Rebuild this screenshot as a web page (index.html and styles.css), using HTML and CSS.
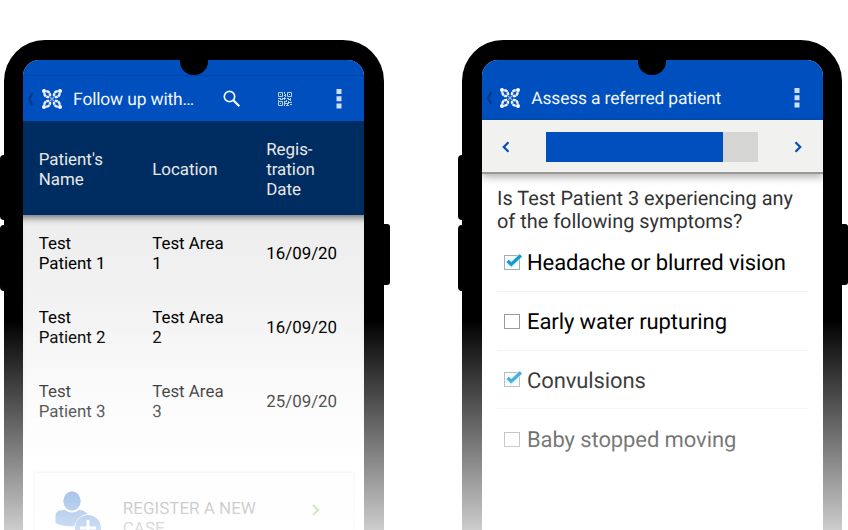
FILE: index.html
```html
<!DOCTYPE html>
<html lang="en">
<head>
<meta charset="utf-8">
<title>Patient follow up</title>
<link rel="stylesheet" href="styles.css">
</head>
<body>
<svg width="0" height="0" class="defs">
  <symbol id="back" viewBox="0 0 7 14"><path d="M5.300 .8 2.200 7l3.100 6.200" fill="none" stroke="#063985" stroke-width="2.200"/></symbol>
  <symbol id="logo" viewBox="0 0 20 20">
    <g id="petal">
      <path d="M4.200 2.300C7 2.500 8.300 4.200 8 7" fill="none" stroke="#f0f5fd" stroke-width="2.400" stroke-dasharray="3.600 .5"/>
      <path d="M2.300 4.200C2.500 7 4.200 8.300 7 8" fill="none" stroke="#f0f5fd" stroke-width="2.400" stroke-dasharray="3.600 .5"/>
      <path d="M7 7 10 10" stroke="#8fb4ea" stroke-width="1.200"/>
      <circle cx="2" cy="2" r="2" fill="#fff"/>
    </g>
    <use href="#petal" transform="rotate(90 10 10)"/>
    <use href="#petal" transform="rotate(180 10 10)"/>
    <use href="#petal" transform="rotate(270 10 10)"/>
  </symbol>
  <symbol id="dots" viewBox="0 0 6 20"><path d="M.5 0h5v5h-5zM.5 7.200h5v5h-5zM.5 14.400h5v5h-5z" fill="#cfdef4"/></symbol>
  <symbol id="checked" viewBox="0 0 20 18">
    <rect x="1.500" y="2.500" width="15" height="14" fill="#f3fbfe" stroke="#a5adb0"/>
    <path d="M5 8.200 8.300 11.500 17.700 2.600" fill="none" stroke="#bfeafa" stroke-width="5.500" opacity=".6"/>
    <path d="M4.600 7.900 8.300 11.400 17.900 2.400" fill="none" stroke="#1698ca" stroke-width="3.200"/>
  </symbol>
  <symbol id="unchecked" viewBox="0 0 20 18"><rect x="1.500" y="2.500" width="15" height="14" fill="#fff" stroke="#999"/></symbol>
</svg>
<main class="stage">
  <section class="phone">
    <i class="key key-up"></i><i class="key key-down"></i><i class="key key-power"></i>
    <div class="screen list-screen">
      <i class="notch"></i>
      <div class="status lined"></div>
      <header class="appbar">
        <svg class="back"><use href="#back"/></svg>
        <svg class="logo"><use href="#logo"/></svg>
        <h1>Follow up with…</h1>
        <svg class="search" viewBox="0 0 18 18"><circle cx="6.500" cy="6.500" r="5.200" fill="none" stroke="#f0f5fd" stroke-width="1.700"/><path d="m10.300 10.300 6 6" stroke="#f0f5fd" stroke-width="2.300"/></svg>
        <svg class="qr" viewBox="0 0 14 14" fill="none" stroke="#bcd1ef"><path d="M.5.5h4v4h-4zM9.500.5h4v4h-4zM.5 9.500h4v4h-4z"/><path d="M2 2.500h1M11 2.500h1M2 11.500h1M6.500 0v2M6 3.500h2M7.500 2v3M0 6.500h3M2 7.500h3M4 6.500h4M6.500 5v3M9 6.500h2M10 7.500h3M12.500 6v3M6 9.500h3M8.500 8v2M10.500 9v3M6.500 10v4M7 11.500h3M8 13.500h3M11 10.500h3M12 12.500h2M9.500 12v2M0 8.500h1"/></svg>
        <svg class="dots"><use href="#dots"/></svg>
      </header>
      <div class="row head"><span>Patient's<br>Name</span><span>Location</span><span>Regis-<br>tration<br>Date</span></div>
      <div class="rows">
        <div class="row"><span>Test<br>Patient 1</span><span>Test Area<br>1</span><span>16/09/20</span></div>
        <div class="row"><span>Test<br>Patient 2</span><span>Test Area<br>2</span><span>16/09/20</span></div>
        <div class="row"><span>Test<br>Patient 3</span><span>Test Area<br>3</span><span>25/09/20</span></div>
      </div>
      <div class="card">
        <svg class="person" viewBox="0 0 48 48"><ellipse cx="17" cy="10" rx="8.700" ry="9.700"/><path d="M.5 32v-8C1 20 5 19 10 19q7 5 14 0c4 0 7 2 8.500 4-8 1-12 7-13 12C12 36 4 34 .5 32Z"/><circle cx="33" cy="37" r="13"/><path d="M33 29v16M25 37h16" stroke="#fff" stroke-width="3"/></svg>
        <span>REGISTER A NEW<br>CASE</span>
        <svg class="go" viewBox="0 0 8 12"><path d="m1 1 5 5-5 5" fill="none" stroke="#58b51e" stroke-width="2.200"/></svg>
      </div>
    </div>
  </section>
  <section class="phone second">
    <i class="key key-up"></i><i class="key key-down"></i><i class="key key-power"></i>
    <div class="screen">
      <i class="notch"></i>
      <div class="status"></div>
      <header class="appbar short">
        <svg class="back"><use href="#back"/></svg>
        <svg class="logo"><use href="#logo"/></svg>
        <h1>Assess a referred patient</h1>
        <svg class="dots"><use href="#dots"/></svg>
      </header>
      <nav class="progress">
        <svg class="arrow" viewBox="0 0 8 12"><path d="M6.500 1.300 1.800 6l4.700 4.700"/></svg>
        <div class="track"><div class="fill"></div></div>
        <svg class="arrow" viewBox="0 0 8 12"><path d="M1.500 1.300 6.200 6l-4.700 4.700"/></svg>
      </nav>
      <div class="form">
        <p>Is Test Patient 3 experiencing any<br>of the following symptoms?</p>
        <div class="option"><svg><use href="#checked"/></svg><span>Headache or blurred vision</span></div>
        <div class="option"><svg><use href="#unchecked"/></svg><span>Early water rupturing</span></div>
        <div class="option"><svg><use href="#checked"/></svg><span>Convulsions</span></div>
        <div class="option"><svg><use href="#unchecked"/></svg><span>Baby stopped moving</span></div>
      </div>
    </div>
  </section>
  <div class="fade"></div>
</main>
</body>
</html>
```

FILE: styles.css
```css
* { box-sizing: border-box; }
body { margin: 0; background: #fff; font-family: Roboto, sans-serif; overflow: hidden; text-rendering: geometricPrecision; }
svg { display: block; flex: none; }
.defs { position: absolute; }
.stage { position: relative; display: flex; gap: 78px; height: 530px; padding: 40px 0 0 4px; overflow: hidden; }
.phone { position: relative; flex: none; width: 380px; height: 510px; padding: 19.5px 19.700px 0 19.300px; background: #000; border-radius: 41px 41px 0 0; }
.key { position: absolute; width: 10px; background: #000; border-radius: 4px; }
.key-up { left: -4px; top: 115px; height: 65px; }
.key-down { left: -4px; top: 185px; height: 66px; }
.key-power { right: -6px; top: 184px; height: 61px; border-radius: 3px; }
.screen { position: relative; height: 100%; background: #fff; border-radius: 16px 16px 0 0; overflow: hidden; display: flex; flex-direction: column; }
.second { padding: 19.500px 19.500px 0; }
.list-screen { background: linear-gradient(#ededed 155px, #f2f2f2 240px, #fff 420px); }
.notch { position: absolute; left: 156.500px; top: -11.500px; width: 28px; height: 27px; border-radius: 14px; background: #000; }
.status { flex: none; height: 16px; background: #004fbe; }
.status.lined { border-bottom: 1px solid #0344a6; }
.appbar { flex: none; height: 45.500px; background: #004fbe; color: #f2f6fc; display: flex; align-items: center; padding: 1px 0 0 4px; }
.appbar.short { height: 44.500px; }
h1 { margin: 2px auto 0 11.300px; font-weight: 400; font-size: 17.400px; letter-spacing: -.14px; line-height: 20px; white-space: nowrap; }
.back { width: 7px; height: 14px; margin-right: 7.500px; }
.logo { width: 20px; height: 20px; }
.search { width: 18px; height: 18px; margin-right: 37px; }
.qr { width: 14px; height: 14px; margin-right: 43.500px; }
.dots { width: 6px; height: 20px; margin-right: 22.500px; }
.row { flex: none; display: grid; grid-template-columns: 113.500px 114px 1fr; align-items: center; height: 74px; padding: 4px 0 0 15.400px; font-size: 16.900px; line-height: 20px; color: #000; }
.row.head { height: 94px; padding-top: 3.500px; background: #002d61; color: #e8e8e8; }
.rows { box-shadow: inset 0 9px 7px -6px rgba(0, 0, 0, .5); }
.card { flex: none; display: flex; width: 318px; height: 90px; margin: 36px 0 0 11.500px; padding-top: 18px; background: #fdfdfd; box-shadow: 0 0 3px rgba(0, 0, 0, .17); color: #555; font-size: 17px; line-height: 20px; }
.card span { padding-top: 8px; }
.person { width: 48px; height: 48px; margin: 0 20px 0 20px; fill: #0757c5; }
.go { width: 8px; height: 12px; margin: 13px 33px 0 auto; }
.progress { flex: none; display: flex; align-items: center; justify-content: space-between; height: 54px; padding: 2px 20.500px 0; background: #f1f1ef; border-bottom: 2px solid #999; box-shadow: 0 3px 8px rgba(0, 0, 0, .32); }
.arrow { width: 8px; height: 12px; fill: none; stroke: #074fba; stroke-width: 2.200px; }
.track { width: 212px; height: 30px; background: #d5d5d3; }
.fill { width: 177px; height: 30px; background: #004fbe; }
.form { padding: 14px 15px 0; }
p { margin: 0; padding-left: .5px; font-size: 19.900px; line-height: 22.500px; color: #333; white-space: nowrap; }
.option { display: flex; align-items: center; height: 58.800px; padding-top: 2px; border-bottom: 1px solid #f0f0f0; font-size: 22px; letter-spacing: -.1px; color: #000; white-space: nowrap; }
.option:last-child { border: 0; }
.option span { padding-top: 2px; }
.option svg { width: 20px; height: 18px; margin: 0 4.500px 2px 6px; }
.fade { position: absolute; left: 0; right: 0; top: 320px; bottom: 0; background: linear-gradient(rgba(255, 255, 255, 0), rgba(255, 255, 255, .8)); }
```
